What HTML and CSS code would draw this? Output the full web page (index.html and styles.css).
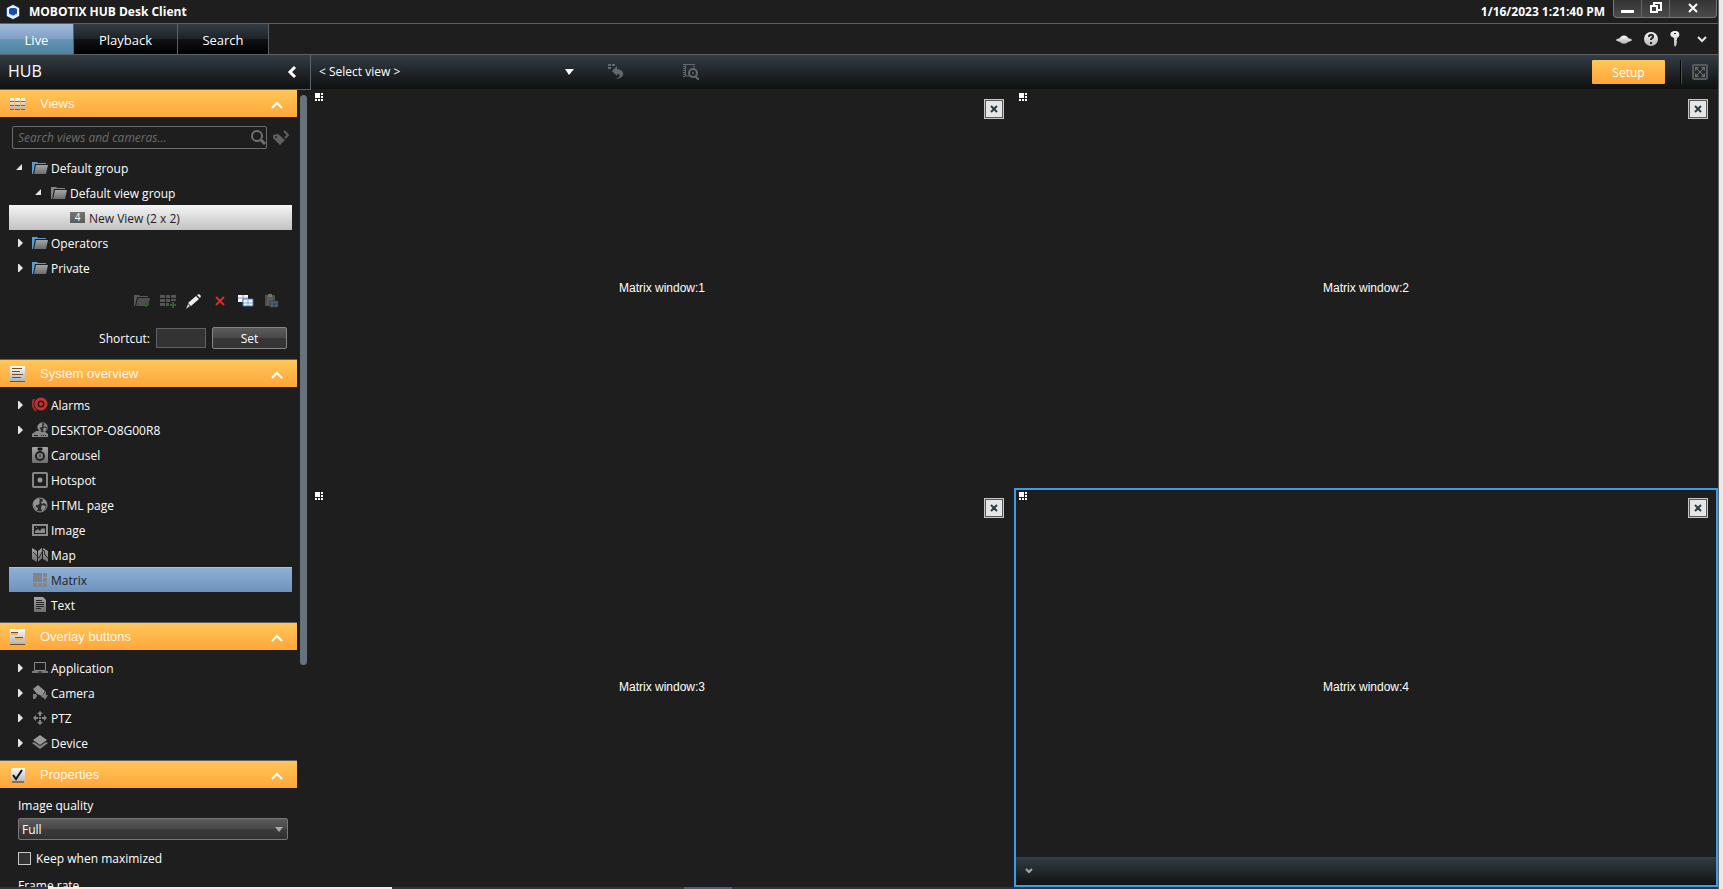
FILE: index.html
```html
<!DOCTYPE html>
<html lang="en">
<head>
    <meta charset="UTF-8">
    <title>MOBOTIX HUB Desk Client</title>
    <link rel="stylesheet" href="styles.css">
</head>
<body>
    <svg class="defs" aria-hidden="true">
        <defs>
            <linearGradient id="metal" x1="0" y1="0" x2="0" y2="1"><stop offset="0" stop-color="#a5a5a5"/><stop offset="1" stop-color="#6c6c6c"/></linearGradient>
            <linearGradient id="silver" x1="0" y1="0" x2="0" y2="1"><stop offset="0" stop-color="#fafafa"/><stop offset="1" stop-color="#b4b4b4"/></linearGradient>
        </defs>
        <symbol id="folder" viewBox="0 0 16 16"><path d="M0 2h5l1 1h8v1H3L1 14H0z" fill="currentColor"/><path d="M4 5h12l-2 9H2z" fill="url(#metal)"/></symbol>
        <symbol id="open" viewBox="0 0 10 8"><path d="M6 0v6H0z" fill="#e4e4e4"/></symbol>
        <symbol id="closed" viewBox="0 0 10 8"><path d="M2 0h1l4 4-4 4H2z" fill="#e4e4e4"/></symbol>
        <symbol id="up" viewBox="0 0 12 8"><path d="M1 7l5-5 5 5" fill="none" stroke="#fff" stroke-width="2"/></symbol>
        <symbol id="matrix" viewBox="0 0 8 8"><path d="M0 0h5v5H0zM6 0h2v2H6zM6 3h2v2H6zM0 6h2v2H0zM3 6h2v2H3zM6 6h2v2H6z" fill="currentColor"/></symbol>
        <symbol id="globe" viewBox="0 0 16 16"><circle cx="8" cy="8" r="7" fill="#2b2b2b" stroke="#929292"/><path d="M2 4l4-3 2 2-1 2 1 1-2 2-2 0v2l2 1-1 3-2-2-2-5zM10 1l4 3 1 4-3-2-2 1-1-2 2-1zM10 8l4 1-2 4-2 1-1-3z" fill="#929292"/></symbol>
        <symbol id="cross" viewBox="0 0 8 8"><path d="M1 1l6 6M7 1L1 7" fill="none" stroke="currentColor" stroke-width="2"/></symbol>
    </svg>

    <div class="app">
        <header class="titlebar">
            <svg class="logo" viewBox="0 0 14 16"><path d="M7 0l7 4v8l-7 4-7-4V4z" fill="#1d4e9e"/><path d="M7 1l6 3v8l-6 3-6-3V4z" fill="#f2f4f7"/><path d="M3 5l2-1h4l2 1v5l-2 1-2 1-2-1-2-1z" fill="#164f9f"/><path d="M3 10l4 2 4-2" fill="none" stroke="#c5d2e6"/></svg>
            <h1>MOBOTIX HUB Desk Client</h1>
            <time>1/16/2023 1:21:40 PM</time>
            <div class="window-buttons">
                <button aria-label="Minimize"><svg width="13" height="16"><path d="M0 10h13v3H0z" fill="#fff"/></svg></button>
                <button class="restore" aria-label="Restore"><svg width="12" height="16"><path d="M4 6V3h7v7H8" fill="none" stroke="#fff" stroke-width="2"/><path d="M1 6h6v6H1z" fill="none" stroke="#fff" stroke-width="2"/></svg></button>
                <button class="close-app" aria-label="Close"><svg width="10" height="16"><path d="M1 4l8 8M9 4l-8 8" stroke="#fff" stroke-width="2"/></svg></button>
            </div>
        </header>

        <nav class="tabs">
            <button class="tab active">Live</button>
            <button class="tab playback">Playback</button>
            <button class="tab search-tab">Search</button>
            <div class="tab-tools">
                <button aria-label="Status"><svg width="16" height="16"><ellipse cx="8" cy="9" rx="8" ry="2" fill="#d0d0d0"/><path d="M3 9c1-6 9-6 10 0-1 5-9 5-10 0z" fill="url(#silver)"/></svg></button>
                <button aria-label="Help"><svg width="16" height="16"><circle cx="8" cy="8" r="7" fill="url(#silver)"/><path d="M6 6c0-3 5-3 4 0 0 1-2 1-2 3M8 11v2" fill="none" stroke="#222" stroke-width="2"/></svg></button>
                <button aria-label="Key"><svg width="10" height="16"><path d="M5 0c6 0 5 6 2 7v6l-2 3-1-2V7C-1 6-1 0 5 0z" fill="url(#silver)"/><path d="M4 2h2v1H4z" fill="#222"/><path d="M7 9v1M7 12v1" stroke="#222"/></svg></button>
                <button aria-label="More"><svg width="10" height="16"><path d="M1 6l4 4 4-4" fill="none" stroke="#e6e6e6" stroke-width="2"/></svg></button>
            </div>
        </nav>

        <div class="workspace">
            <aside class="sidebar">
                <div class="sidebar-head">
                    <h2>HUB</h2>
                    <button aria-label="Collapse sidebar"><svg width="10" height="14"><path d="M8 2L3 7l5 5" fill="none" stroke="#fff" stroke-width="3"/></svg></button>
                </div>
                <div class="sidebar-scroll">
                    <div class="panels">
                        <section>
                            <button class="panel-head first">
                                <svg width="16" height="16"><path d="M0 2h4v3H0zM5 2h5v3H5zM11 2h4v3h-4zM0 6h4v3H0zM5 6h5v3H5zM11 6h4v3h-4zM0 10h4v3H0zM5 10h5v3H5zM11 10h4v3h-4z" fill="url(#silver)"/><path d="M0 5h4v1H0zM5 5h5v1H5zM11 5h4v1h-4zM0 9h4v1H0zM5 9h5v1H5zM11 9h4v1h-4zM0 13h4v1H0zM5 13h5v1H5zM11 13h4v1h-4z" fill="#81683d"/></svg>
                                <span>Views</span><svg class="chev"><use href="#up"/></svg>
                            </button>
                            <div class="search">
                                <div class="search-box">
                                    <input type="text" aria-label="Search views and cameras" placeholder="Search views and cameras...">
                                    <svg width="16" height="16"><circle cx="7" cy="6" r="5" fill="none" stroke="#707070" stroke-width="2"/><path d="M11 10l4 4" stroke="#707070" stroke-width="3"/></svg>
                                </div>
                                <button aria-label="Tags"><svg width="16" height="16"><path d="M0 5l5-1 7 6-5 5-7-7z" fill="#606060"/><circle cx="3" cy="7" r="1" fill="#1e1e1e"/><path d="M11 1l4 4-3 3" fill="none" stroke="#606060" stroke-width="2"/></svg></button>
                            </div>
                            <ul class="tree">
                                <li><button class="row"><svg class="arrow"><use href="#open"/></svg><svg class="icon blue"><use href="#folder"/></svg>Default group</button>
                                    <ul>
                                        <li><button class="row level-2"><svg class="arrow"><use href="#open"/></svg><svg class="icon grey"><use href="#folder"/></svg>Default view group</button>
                                            <ul>
                                                <li><button class="row level-3 selected-view"><span class="arrow"></span><span class="count">4</span>New View (2 x 2)</button></li>
                                            </ul>
                                        </li>
                                    </ul>
                                </li>
                                <li><button class="row"><svg class="arrow"><use href="#closed"/></svg><svg class="icon blue"><use href="#folder"/></svg>Operators</button></li>
                                <li><button class="row"><svg class="arrow"><use href="#closed"/></svg><svg class="icon blue"><use href="#folder"/></svg>Private</button></li>
                            </ul>
                            <div class="view-tools">
                                <button aria-label="New group"><svg width="16" height="16"><path d="M0 2h5l1 1h8v1H3L1 13H0z" fill="#5a5a5a"/><path d="M4 5h12l-2 8H2z" fill="#4f4f4f"/><path d="M12 8v6M9 11h6" stroke="#2d6027" stroke-width="2"/></svg></button>
                                <button aria-label="New view"><svg width="16" height="16"><path d="M0 2h5v3H0zM6 2h4v3H6zM11 2h5v3h-5zM0 6h5v3H0zM6 6h4v3H6zM11 6h5v2h-5zM0 10h5v3H0zM6 10h3v3H6z" fill="#555"/><path d="M13 9v6M10 12h6" stroke="#2d6027" stroke-width="2"/></svg></button>
                                <button aria-label="Rename"><svg width="16" height="16"><path d="M11 2l2-1 2 2-1 2zM10 3l3 3-8 7-3-3z" fill="#ededed"/><path d="M2 11l2 2-4 3z" fill="#cfcfcf"/></svg></button>
                                <button aria-label="Delete"><svg width="16" height="16"><path d="M4 4l8 8M12 4l-8 8" stroke="#d72e2e" stroke-width="2"/></svg></button>
                                <button aria-label="Copy"><svg width="16" height="16"><path d="M0 2h10v7H0z" fill="#f4f8fd"/><path d="M5 2v7M0 5h10" stroke="#7fa3d4"/><path d="M5 6h10v7H5z" fill="#f4f8fd" stroke="#4475b4"/><path d="M10 7v6M5 10h10" stroke="#7fa3d4"/></svg></button>
                                <button aria-label="Paste"><svg width="16" height="16"><path d="M1 2h10v11H1z" fill="#574d3a"/><path d="M3 3h6v9H3z" fill="#555d64"/><path d="M4 1h4v3H4z" fill="#76706a"/><path d="M6 8h8v6H6z" fill="#5e6771" stroke="#2c3e50"/><path d="M10 8v6M6 11h8" stroke="#2c3e50"/></svg></button>
                            </div>
                            <div class="shortcut">
                                <label for="shortcut">Shortcut:</label>
                                <input type="text" id="shortcut">
                                <button class="set">Set</button>
                            </div>
                        </section>

                        <section>
                            <button class="panel-head">
                                <svg width="16" height="16"><path d="M0 0h15v15H0z" fill="url(#silver)"/><path d="M2 2h10v1H2zM2 5h8v1H2zM2 8h11v1H2zM2 11h9v1H2zM0 15h15v1H0z" fill="#76511e"/></svg>
                                <span>System overview</span><svg class="chev"><use href="#up"/></svg>
                            </button>
                            <ul class="tree">
                                <li><button class="row"><svg class="arrow"><use href="#closed"/></svg><svg class="icon" viewBox="0 0 16 16"><circle cx="9" cy="7" r="5" fill="#241818" stroke="#c9302f" stroke-width="3"/><circle cx="9" cy="7" r="2" fill="#c9302f"/><path d="M2 2c-2 4-2 8 2 12" fill="none" stroke="#a72b2b" stroke-width="2"/></svg>Alarms</button></li>
                                <li><button class="row"><svg class="arrow"><use href="#closed"/></svg><svg class="icon" viewBox="0 0 16 16"><path d="M0 12l4-3h8l4 3v3H0z" fill="#888"/><svg x="5" y="0" width="11" height="11"><use href="#globe"/></svg><path d="M2 13h4v1H2zM9 13h1v1H9zM11 13h1v1h-1zM13 13h1v1h-1z" fill="#222"/></svg>DESKTOP-O8G00R8</button></li>
                                <li><button class="row"><span class="arrow"></span><svg class="icon" viewBox="0 0 16 16"><rect width="16" height="16" rx="1" fill="url(#metal)"/><circle cx="8" cy="9" r="4" fill="none" stroke="#202020" stroke-width="2"/><path d="M6 1h4v2H6zM8 3v2M8 7v3" stroke="#202020"/></svg>Carousel</button></li>
                                <li><button class="row"><span class="arrow"></span><svg class="icon" viewBox="0 0 16 16"><rect x="1" y="1" width="14" height="14" rx="1" fill="none" stroke="#868686" stroke-width="2"/><circle cx="8" cy="8" r="2.500" fill="#999"/></svg>Hotspot</button></li>
                                <li><button class="row"><span class="arrow"></span><svg class="icon"><use href="#globe"/></svg>HTML page</button></li>
                                <li><button class="row"><span class="arrow"></span><svg class="icon" viewBox="0 0 16 16"><rect x="1" y="3" width="14" height="10" fill="none" stroke="#8b8b8b" stroke-width="2"/><path d="M3 11V9l3-2 2 2 2-3 1 1 1-1 1 1v4z" fill="#8b8b8b"/><path d="M4 5h1v1H4z" fill="#8b8b8b"/></svg>Image</button></li>
                                <li><button class="row"><span class="arrow"></span><svg class="icon" viewBox="0 0 16 16"><path d="M0 1l5 3v11l-5-3zM6 4l4-3v10l-4 4zM11 1l5 3v11l-5-3z" fill="url(#metal)"/><path d="M1 5l3 3 3 3 3-6 2-2 1 5 3 3" fill="none" stroke="#292929"/></svg>Map</button></li>
                                <li><button class="row selected-item"><span class="arrow"></span><svg class="icon" viewBox="0 0 16 16"><path d="M1 1h9v9H1zM11 1h4v4h-4zM11 6h4v4h-4zM1 11h4v4H1zM6 11h4v4H6zM11 11h4v4h-4z" fill="#858585"/></svg>Matrix</button></li>
                                <li><button class="row"><span class="arrow"></span><svg class="icon" viewBox="0 0 16 16"><path d="M2 0h9l3 3v12H2z" fill="url(#metal)"/><path d="M4 3h6v1H4zM4 5h8v1H4zM4 7h8v1H4zM4 9h8v1H4zM4 11h5v1H4z" fill="#252525"/></svg>Text</button></li>
                            </ul>
                        </section>

                        <section>
                            <button class="panel-head">
                                <svg width="16" height="16"><path d="M0 0h15v15H0z" fill="url(#silver)"/><path d="M1 3h7v3H1zM5 8h8v3H5z" fill="#ffb445"/><path d="M1 3h7v1H1zM5 8h8v1H5zM0 15h15v1H0z" fill="#76511e"/></svg>
                                <span>Overlay buttons</span><svg class="chev"><use href="#up"/></svg>
                            </button>
                            <ul class="tree">
                                <li><button class="row"><svg class="arrow"><use href="#closed"/></svg><svg class="icon" viewBox="0 0 16 16"><path d="M2.500 2.500h11v8h-11z" fill="none" stroke="#8a8a8a"/><path d="M0 11h16v2H0z" fill="#777"/><path d="M6 12h4" stroke="#222"/></svg>Application</button></li>
                                <li><button class="row"><svg class="arrow"><use href="#closed"/></svg><svg class="icon" viewBox="0 0 16 16"><path d="M1 4l5-4 7 6-3 5-5-2z" fill="#939393"/><path d="M1 14V9h3l1 2-2 3zM9 12l5-6v4h2l-3 5-1-2z" fill="#808080"/></svg>Camera</button></li>
                                <li><button class="row"><svg class="arrow"><use href="#closed"/></svg><svg class="icon" viewBox="0 0 16 16"><path d="M8 1l3 3H5zM8 15l3-3H5zM1 8l3-3v6zM15 8l-3-3v6zM7 4h2v2H7zM7 10h2v2H7zM4 7h2v2H4zM10 7h2v2h-2zM7 7h2v2H7z" fill="#858585"/></svg>PTZ</button></li>
                                <li><button class="row"><svg class="arrow"><use href="#closed"/></svg><svg class="icon" viewBox="0 0 16 16"><path d="M8 0l7 5-7 5-7-5z" fill="#999"/><path d="M0 8l2-1 6 4 6-4 2 1-8 6z" fill="#858585"/></svg>Device</button></li>
                            </ul>
                        </section>

                        <section>
                            <button class="panel-head">
                                <svg width="16" height="16"><rect x="1" y="1" width="14" height="14" rx="1" fill="url(#silver)"/><path d="M2 15h12" stroke="#333"/><path d="M3 8l3 4 6-9" fill="none" stroke="#111" stroke-width="2"/></svg>
                                <span>Properties</span><svg class="chev"><use href="#up"/></svg>
                            </button>
                            <div class="properties">
                                <label for="quality">Image quality</label>
                                <div class="select-wrap">
                                    <select id="quality"><option>Full</option></select>
                                    <svg width="8" height="5"><path d="M0 0h8L4 5z" fill="#aaa"/></svg>
                                </div>
                                <label class="check"><input type="checkbox">Keep when maximized</label>
                                <div class="frame-rate">Frame rate</div>
                            </div>
                        </section>
                    </div>
                    <div class="scrollbar"><div class="thumb"></div></div>
                </div>
            </aside>

            <main>
                <div class="toolbar">
                    <div class="view-select">
                        <select aria-label="Select view"><option>&lt; Select view &gt;</option></select>
                        <svg width="10" height="6"><path d="M1 0h9L5 6z" fill="#fff"/></svg>
                    </div>
                    <button class="reload" aria-label="Reload view"><svg width="16" height="16"><path d="M0 0h3v2H0zM4 0h3v2H4zM0 3h3v2H0z" fill="#626a6d"/><path d="M4 7l5-5v3c9 1 8 10-2 10 6-2 6-5 2-5v2z" fill="#626a6d"/></svg></button>
                    <button class="evidence" aria-label="Evidence search"><svg width="16" height="16"><path d="M1 0v13M11 0v6" stroke="#626a6d" stroke-width="2" stroke-dasharray="1 1"/><path d="M2.500 0v12h6M2 .500h8" fill="none" stroke="#626a6d"/><circle cx="10" cy="9" r="4" fill="none" stroke="#626a6d" stroke-width="2"/><circle cx="10" cy="9" r="1" fill="#626a6d"/><path d="M12 12l4 4" stroke="#626a6d" stroke-width="2"/></svg></button>
                    <button class="setup">Setup</button>
                    <div class="separator"></div>
                    <button aria-label="Full screen"><svg width="16" height="16"><rect x="1" y="1" width="14" height="14" rx="1" fill="#272b2c" stroke="#555b5d" stroke-width="2"/><path d="M4 4l8 8M12 4l-8 8" stroke="#6b7072"/><path d="M3 3h4L3 7zM13 3v4L9 3zM3 13V9l4 4zM13 13H9l4-4z" fill="#6b7072"/></svg></button>
                </div>
                <div class="grid">
                    <div class="tile"><svg class="mark"><use href="#matrix"/></svg>Matrix window:1<button class="close" aria-label="Close"><svg><use href="#cross"/></svg></button></div>
                    <div class="tile"><svg class="mark"><use href="#matrix"/></svg>Matrix window:2<button class="close" aria-label="Close"><svg><use href="#cross"/></svg></button></div>
                    <div class="tile"><svg class="mark"><use href="#matrix"/></svg>Matrix window:3<button class="close" aria-label="Close"><svg><use href="#cross"/></svg></button></div>
                    <div class="tile current"><svg class="mark"><use href="#matrix"/></svg>Matrix window:4<button class="close" aria-label="Close"><svg><use href="#cross"/></svg></button>
                        <div class="tile-bar"><button aria-label="Expand"><svg width="8" height="6"><path d="M1 1l3 3 3-3" fill="none" stroke="#a5a9ab" stroke-width="2"/></svg></button></div>
                    </div>
                </div>
            </main>
        </div>
        <footer class="taskbar"><span></span><span class="task-search"></span><span></span><span class="task-app"></span></footer>
    </div>
</body>
</html>
```

FILE: styles.css
```css
* {
    box-sizing: border-box;
}

body {
    margin: 0;
    height: 100vh;
    overflow: hidden;
    background-color: #ebeae9;
    color: #fff;
    font-family: "Open Sans", "Noto Sans", sans-serif;
    font-size: 12px;
}

button, input, select {
    font: inherit;
    color: inherit;
    margin: 0;
}

button {
    background: none;
    border: 0;
    padding: 0;
    cursor: pointer;
}

svg {
    display: block;
    flex: none;
}

h1, h2, ul {
    margin: 0;
    padding: 0;
    list-style: none;
}

.defs {
    position: absolute;
    width: 0;
    height: 0;
}

.app {
    display: flex;
    flex-direction: column;
    height: 100vh;
    margin-right: 4px;
    border-right: 1px solid #666;
    background-color: #1e1e1e;
}

/* title bar */
.titlebar {
    display: flex;
    align-items: center;
    height: 24px;
    padding-left: 6px;
    border-bottom: 1px solid #5d5f60;
}

.logo {
    width: 14px;
    height: 16px;
    margin-right: 9px;
}

h1 {
    flex: 1;
    font-size: 12px;
}

time {
    font-weight: bold;
    margin-right: 8px;
}

.window-buttons {
    display: flex;
    align-self: flex-start;
    height: 18px;
    margin-right: 1px;
    border: 1px solid #777;
    border-top: 0;
    border-radius: 0 0 4px 4px;
    background: linear-gradient(#343434, #4a4a4a);
}

.window-buttons button {
    width: 28px;
    display: flex;
    justify-content: center;
    border-right: 1px solid #666;
}

.window-buttons .close-app {
    width: 46px;
    border-right: 0;
}

/* mode tabs */
.tabs {
    display: flex;
    height: 31px;
    border-bottom: 1px solid #5d6164;
}

.tab {
    width: 104px;
    padding-top: 2px;
    border-right: 1px solid #5d6164;
    font-size: 13px;
    background: linear-gradient(#343d44 0%, #1d2327 50%, #101214 50%, #000 100%);
}

.tab.active {
    width: 74px;
    background: linear-gradient(#a1bbdc 0%, #7f9fc3 50%, #6193b3 52%, #4f82a0 100%);
}

.search-tab {
    width: 91px;
}

.tab-tools {
    display: flex;
    align-items: center;
    gap: 11px;
    margin-left: auto;
    padding-right: 11px;
}

.tab-tools button:last-child {
    margin-left: 6px;
}

.workspace {
    flex: 1;
    min-height: 0;
    display: flex;
}

/* sidebar */
.sidebar {
    width: 311px;
    display: flex;
    flex-direction: column;
    min-height: 0;
}

.sidebar-head {
    display: flex;
    flex: none;
    align-items: center;
    justify-content: space-between;
    height: 35px;
    padding: 0 13px 0 8px;
    border-right: 1px solid #5d6164;
    border-bottom: 1px solid #5d6164;
    background: linear-gradient(#333d45, #1c2124 60%, #101010);
}

h2 {
    padding-bottom: 2px;
    font-size: 16px;
    font-weight: normal;
}

.sidebar-scroll {
    flex: 1;
    min-height: 0;
    display: flex;
}

.panels {
    width: 297px;
    overflow: hidden;
}

.scrollbar {
    padding: 5px 4px 0 3px;
}

.thumb {
    width: 7px;
    height: 72%;
    border-radius: 4px;
    background-color: #67737a;
}

.panel-head {
    display: flex;
    align-items: center;
    width: 100%;
    height: 28px;
    padding: 0 14px 0 10px;
    border-top: 1px solid #5d6164;
    background: linear-gradient(#ffc75a, #ffa63a);
    color: #f8f4ec;
    font-family: "Liberation Sans", Arial, sans-serif;
    font-size: 13px;
    text-align: left;
}

.panel-head.first {
    height: 27px;
    border-top: 0;
}

.panel-head span {
    flex: 1;
    margin-left: 14px;
}

.chev {
    width: 12px;
    height: 8px;
    margin-top: 2px;
}

.search {
    display: flex;
    align-items: center;
    gap: 6px;
    padding: 9px 8px 6px 12px;
}

.search-box {
    display: flex;
    align-items: center;
    flex: 1;
    height: 23px;
    padding: 0 0 0 5px;
    border: 1px solid #6c6c6c;
    border-radius: 2px;
}

.search-box input {
    flex: 1;
    min-width: 0;
    border: 0;
    padding: 0;
    background: none;
    outline: 0;
}

.search-box input::placeholder {
    color: #6c6c6c;
    font-style: italic;
}

.tree {
    padding: 0 5px 0 9px;
}

section + section .tree {
    padding-top: 5px;
    padding-bottom: 5px;
}

.row {
    display: flex;
    align-items: center;
    width: 100%;
    height: 25px;
    padding-top: 2px;
    padding-left: 7px;
    white-space: nowrap;
}

.row.level-2 {
    padding-left: 26px;
}

.row.level-3 {
    padding-left: 45px;
}

.arrow {
    width: 10px;
    height: 8px;
    margin-right: 6px;
    margin-bottom: 2px;
}

.icon {
    width: 16px;
    height: 16px;
    margin-right: 3px;
    margin-bottom: 2px;
}

.blue {
    color: #5b9bd0;
}

.grey {
    color: #858585;
}

.count {
    width: 15px;
    height: 11px;
    margin-right: 4px;
    margin-bottom: 2px;
    background: linear-gradient(#777, #5a5a5a);
    color: #fff;
    font-size: 10px;
    line-height: 11px;
}

.selected-view {
    background: linear-gradient(#f5f5f5, #c2c2c2);
    color: #1e1e1e;
}

.selected-item {
    background: linear-gradient(#8fb1d9, #6e93b9);
    box-shadow: inset 0 1px #a4c3e6;
    color: #1e1e1e;
}

.view-tools {
    display: flex;
    justify-content: flex-end;
    gap: 10px;
    padding: 13px 17px 18px 0;
}

.shortcut {
    display: flex;
    align-items: center;
    justify-content: flex-end;
    gap: 6px;
    padding: 0 10px 10px 0;
}

.shortcut input {
    width: 50px;
    height: 20px;
    border: 1px solid #5c6468;
    background-color: #333;
}

.set {
    width: 75px;
    height: 22px;
    border: 1px solid #858585;
    border-radius: 2px;
    background: linear-gradient(#5b5b5b, #484848 50%, #383838 50%, #333);
}

.properties {
    padding: 9px 9px 0 18px;
}

.properties label {
    display: block;
    line-height: 17px;
    margin-bottom: 4px;
}

.select-wrap, .view-select {
    display: grid;
    align-items: center;
}

.select-wrap select, .view-select select {
    grid-area: 1 / 1;
    appearance: none;
    width: 100%;
    border: 0;
    background: none;
}

.select-wrap svg, .view-select svg {
    grid-area: 1 / 1;
    justify-self: end;
    margin-right: 5px;
    pointer-events: none;
}

.select-wrap select {
    height: 22px;
    padding: 0 3px;
    border: 1px solid #777;
    border-radius: 2px;
    background: linear-gradient(#5b5b5b, #474747 50%, #3c3c3c 50%, #303030);
}

.properties .check {
    display: flex;
    align-items: center;
    gap: 5px;
    margin: 10px 0;
}

.check input {
    appearance: none;
    width: 13px;
    height: 13px;
    border: 1px solid #c8c8c8;
    background-color: #333;
}

.frame-rate {
    line-height: 17px;
}

/* view area */
main {
    flex: 1;
    min-width: 0;
    display: flex;
    flex-direction: column;
}

.toolbar {
    display: flex;
    flex: none;
    align-items: center;
    height: 34px;
    padding: 0 10px 0 4px;
    background: linear-gradient(#333d45, #1c2124 60%, #101010);
}

.view-select {
    width: 264px;
}

.view-select select {
    padding: 0 4px 1px;
}

.reload {
    margin-left: 29px;
}

.evidence {
    margin-left: 59px;
}

.setup {
    width: 73px;
    height: 24px;
    margin-left: auto;
    border-radius: 1px;
    background: linear-gradient(#ffc75a, #ffa63a);
}

.separator {
    width: 2px;
    height: 24px;
    margin: 0 10px 0 15px;
    border-left: 1px solid #000;
    border-right: 1px solid #4a4f52;
}

.grid {
    flex: 1;
    display: grid;
    grid-template-columns: 1fr 1fr;
    grid-template-rows: 1fr 1fr;
    margin-left: -1px;
}

.tile {
    position: relative;
    display: flex;
    align-items: center;
    justify-content: center;
    padding-bottom: 2px;
    font-family: "Liberation Sans", Arial, sans-serif;
}

.current {
    outline: 2px solid #399de8;
    outline-offset: -2px;
}

.mark {
    position: absolute;
    top: 4px;
    left: 5px;
    width: 8px;
    height: 8px;
}

.close {
    position: absolute;
    top: 10px;
    right: 10px;
    display: flex;
    align-items: center;
    justify-content: center;
    width: 20px;
    height: 20px;
    border: 1px solid #c4c6c8;
    background-color: #e6e6e6;
    box-shadow: inset 0 0 0 1px #53585b;
    color: #2d3a42;
}

.close svg {
    width: 8px;
    height: 8px;
}

.tile-bar {
    position: absolute;
    left: 2px;
    right: 2px;
    bottom: 2px;
    display: flex;
    align-items: center;
    height: 28px;
    padding-left: 9px;
    background: linear-gradient(#333d45, #1f2426 60%, #111);
}

/* strip of the desktop taskbar under the window */
.taskbar {
    display: grid;
    grid-template-columns: 48px 20% 17% 48px;
    height: 2px;
    background-color: #243845;
}

.task-search {
    background-color: #efeeed;
}

.task-app {
    background-color: #505f69;
}
```
